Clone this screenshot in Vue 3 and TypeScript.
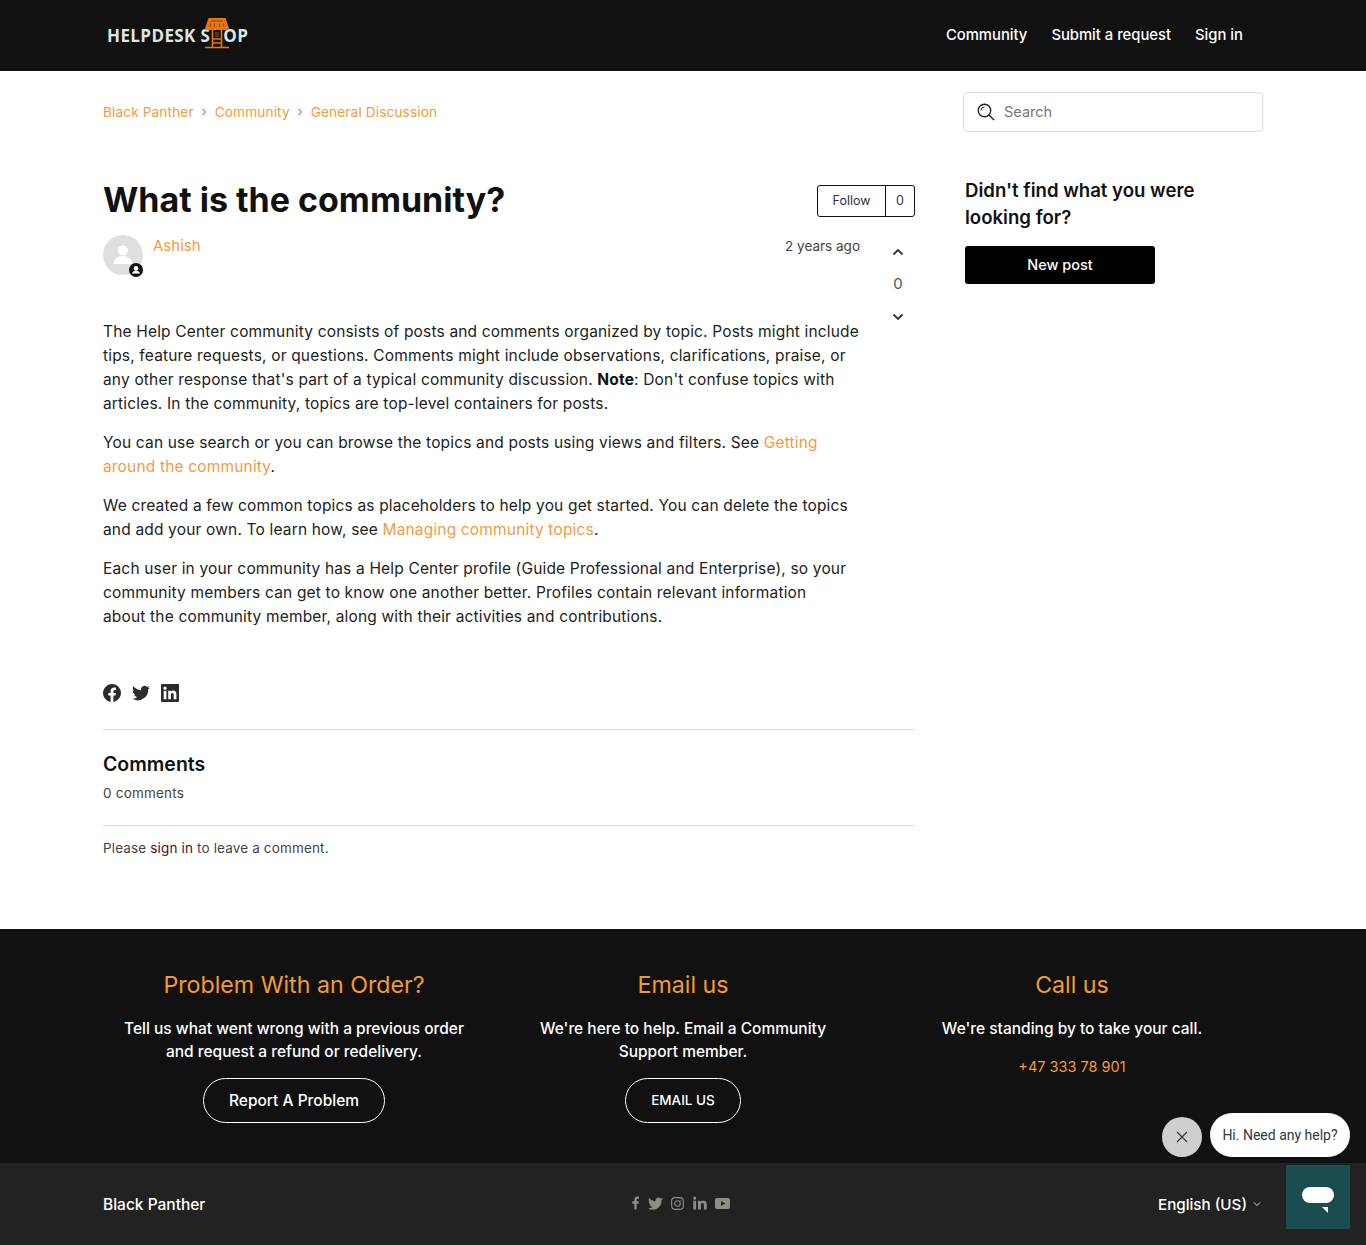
<template>
  <div class="page">
    <header class="topbar">
      <div class="topbar-inner">
        <a class="logo">
          <span class="logo-text">HELPDESK <span class="logo-s">S</span><span class="logo-gap" /><span>OP</span></span>
          <svg class="logo-icon" viewBox="0 0 26 32" width="26" height="32">
            <path d="M4.500 1h17L25 11.500a1.500 1.500 0 0 1-1.500 1.500h-21A1.500 1.500 0 0 1 1 11.500z" fill="#e8750f" />
            <path d="M7 4h12M6.500 6.500L6 10M10.500 6.500L10.300 10M15.500 6.500L15.700 10M19.500 6.500L20 10" stroke="#8a4508" stroke-width="1" fill="none" />
            <path d="M8.500 13v17M17.500 13v17M8.500 22h9M8.500 26h9M1 30.500h24" stroke="#e8750f" stroke-width="1.600" fill="none" />
            <rect x="11" y="15" width="4" height="5" fill="#5b3208" />
          </svg>
        </a>
        <nav class="topnav">
          <a>Community</a>
          <a>Submit a request</a>
          <a>Sign in</a>
        </nav>
      </div>
    </header>

    <main class="content">
      <div class="sub-row">
        <ol class="crumbs">
          <li v-for="(c, i) in crumbs" :key="c">
            <a>{{ c }}</a>
            <svg v-if="i < crumbs.length - 1" class="crumb-sep" viewBox="0 0 8 8" width="8" height="8">
              <path d="M2.500 1l3 3-3 3" stroke="#555" stroke-width="1" fill="none" />
            </svg>
          </li>
        </ol>
        <div class="search">
          <svg viewBox="0 0 18 18" width="18" height="18">
            <circle cx="7.500" cy="7.500" r="6.200" stroke="#222" stroke-width="1.400" fill="none" />
            <path d="M12 12l5 5" stroke="#222" stroke-width="1.400" />
            <path d="M4 7.500a3.500 3.500 0 0 1 3.500-3.500" stroke="#222" stroke-width="1" fill="none" />
          </svg>
          <span>Search</span>
        </div>
      </div>

      <div class="columns">
        <article class="post">
          <div class="post-head">
            <h1>What is the community?</h1>
            <div class="follow">
              <span class="follow-btn">Follow</span>
              <span class="follow-count">0</span>
            </div>
          </div>

          <div class="post-grid">
            <div class="post-main">
              <div class="author">
                <div class="avatar">
                  <svg viewBox="0 0 40 40" width="40" height="40">
                    <circle cx="20" cy="20" r="20" fill="#dfdfdf" />
                    <circle cx="20" cy="15.500" r="5" fill="#fff" />
                    <path d="M10.500 29c.5-5 4-8 9.500-8s9 3 9.500 8z" fill="#fff" />
                  </svg>
                  <svg class="avatar-badge" viewBox="0 0 14 14" width="14" height="14">
                    <circle cx="7" cy="7" r="7" fill="#111" />
                    <circle cx="7" cy="5.400" r="2.300" fill="#fff" />
                    <path d="M3 10.500c.6-2 2.200-2.700 4-2.700s3.400.7 4 2.700z" fill="#fff" />
                  </svg>
                </div>
                <a class="author-name">Ashish</a>
                <span class="when">2 years ago</span>
              </div>

              <div class="body">
                <p>The Help Center community consists of posts and comments organized by topic. Posts might include<br>tips, feature requests, or questions. Comments might include observations, clarifications, praise, or<br>any other response that's part of a typical community discussion. <b>Note</b>: Don't confuse topics with<br>articles. In the community, topics are top-level containers for posts.</p>
                <p>You can use search or you can browse the topics and posts using views and filters. See <a>Getting<br>around the community</a>.</p>
                <p>We created a few common topics as placeholders to help you get started. You can delete the topics<br>and add your own. To learn how, see <a>Managing community topics</a>.</p>
                <p>Each user in your community has a Help Center profile (Guide Professional and Enterprise), so your<br>community members can get to know one another better. Profiles contain relevant information<br>about the community member, along with their activities and contributions.</p>
              </div>
            </div>

            <div class="vote">
              <svg viewBox="0 0 12 8" width="12" height="8"><path d="M1.500 6.500L6 2l4.500 4.500" stroke="#333" stroke-width="1.800" fill="none" /></svg>
              <span>0</span>
              <svg viewBox="0 0 12 8" width="12" height="8"><path d="M1.500 1.500L6 6l4.500-4.500" stroke="#333" stroke-width="1.800" fill="none" /></svg>
            </div>
          </div>

          <div class="share">
            <svg viewBox="0 0 18 18" width="18" height="18">
              <path fill="#2c2c2c" d="M18 9a9 9 0 1 0-10.400 8.900v-6.300H5.300V9h2.300V7c0-2.300 1.300-3.500 3.400-3.500 1 0 2 .2 2 .2v2.200h-1.100c-1.100 0-1.500.7-1.500 1.400V9h2.500l-.4 2.600h-2.100v6.300A9 9 0 0 0 18 9z" />
            </svg>
            <svg viewBox="0 0 18 18" width="18" height="18">
              <path fill="#2c2c2c" d="M18 3.400c-.7.3-1.400.5-2.100.6.8-.5 1.300-1.200 1.600-2-.7.4-1.500.7-2.300.9A3.700 3.700 0 0 0 9 6.200C6 6 3.300 4.600 1.300 2.300c-1 1.700-.5 3.800 1.100 4.900-.6 0-1.200-.2-1.700-.5 0 1.800 1.300 3.300 3 3.700-.5.1-1.100.2-1.700.1.500 1.500 1.800 2.500 3.400 2.600A7.400 7.400 0 0 1 0 14.600 10.500 10.500 0 0 0 16.200 5.200c.7-.5 1.300-1.100 1.800-1.800z" />
            </svg>
            <svg viewBox="0 0 18 18" width="18" height="18">
              <path fill="#2c2c2c" fill-rule="evenodd" d="M1 0h16a1 1 0 0 1 1 1v16a1 1 0 0 1-1 1H1a1 1 0 0 1-1-1V1a1 1 0 0 1 1-1zM2.700 6.800v8.500h2.700V6.800zM4 2.600a1.600 1.600 0 1 0 0 3.200 1.600 1.600 0 0 0 0-3.200zM7.200 6.800v8.500h2.700v-4.400c0-1.200.4-2 1.500-2s1.300.9 1.300 2.100v4.300h2.700v-4.900c0-2.400-1.200-3.800-3.100-3.800-1.200 0-2 .6-2.400 1.300V6.800z" />
            </svg>
          </div>

          <section class="comments">
            <h2>Comments</h2>
            <div class="count">0 comments</div>
          </section>
          <p class="sign-note">Please <a>sign in</a> to leave a comment.</p>
        </article>

        <aside class="side">
          <h3>Didn't find what you were<br>looking for?</h3>
          <a class="new-post">New post</a>
        </aside>
      </div>
    </main>

    <section class="help">
      <div v-for="b in blocks" :key="b.title" class="help-col">
        <h4>{{ b.title }}</h4>
        <p v-html="b.text" />
        <a v-if="b.btn" class="pill" :class="{ 'pill-caps': b.btn === 'EMAIL US' }">{{ b.btn }}</a>
        <a v-else class="phone">+47 333 78 901</a>
      </div>
    </section>

    <footer class="bottom">
      <span class="brand">Black Panther</span>
      <div class="socials">
        <svg viewBox="0 0 8 15" width="7" height="14"><path fill="#8a8f85" d="M5.300 15V8.300h2.200l.4-2.700H5.300V4c0-.8.3-1.300 1.400-1.300H8V.2C7.700.1 7 0 6.100 0 4.100 0 2.700 1.200 2.700 3.600v2H.3v2.700h2.400V15z" /></svg>
        <svg viewBox="0 0 18 18" width="15" height="15"><path fill="#8a8f85" d="M18 3.400c-.7.3-1.400.5-2.100.6.8-.5 1.300-1.200 1.600-2-.7.4-1.500.7-2.300.9A3.700 3.700 0 0 0 9 6.200C6 6 3.300 4.600 1.300 2.300c-1 1.700-.5 3.800 1.100 4.900-.6 0-1.200-.2-1.700-.5 0 1.800 1.300 3.300 3 3.700-.5.1-1.100.2-1.700.1.500 1.500 1.800 2.500 3.400 2.600A7.400 7.400 0 0 1 0 14.600 10.500 10.500 0 0 0 16.200 5.200c.7-.5 1.300-1.100 1.800-1.800z" /></svg>
        <svg viewBox="0 0 14 14" width="13" height="13" fill="none" stroke="#8a8f85" stroke-width="1.200"><rect x=".7" y=".7" width="12.600" height="12.600" rx="3.500" /><circle cx="7" cy="7" r="3" /><circle cx="10.600" cy="3.400" r=".6" fill="#8a8f85" stroke="none" /></svg>
        <svg viewBox="0 0 15 14" width="14" height="14"><path fill="#8a8f85" d="M.3 4.700h3V14h-3zM1.800 0a1.700 1.700 0 1 1 0 3.400 1.700 1.700 0 0 1 0-3.400zM5.200 4.700H8V6c.5-.8 1.500-1.500 3-1.500 3 0 3.700 2 3.700 4.500v5h-3V9.600c0-1.100 0-2.500-1.500-2.500s-1.800 1.200-1.800 2.400V14h-3z" /></svg>
        <svg viewBox="0 0 15 11" width="15" height="11"><path fill="#8a8f85" fill-rule="evenodd" d="M2 0h11a2 2 0 0 1 2 2v7a2 2 0 0 1-2 2H2a2 2 0 0 1-2-2V2a2 2 0 0 1 2-2zm4 3v5l4.200-2.500z" /></svg>
      </div>
      <span class="lang">English (US)
        <svg viewBox="0 0 8 6" width="8" height="6"><path d="M1 1.500l3 3 3-3" stroke="#ddd" stroke-width="1" fill="none" /></svg>
      </span>
    </footer>

    <div class="widget-close">
      <svg viewBox="0 0 12 12" width="12" height="12"><path d="M1 1l10 10M11 1L1 11" stroke="#333" stroke-width="1.100" /></svg>
    </div>
    <div class="widget-bubble">Hi. Need any help?</div>
    <div class="widget-launch">
      <svg viewBox="0 0 32 26" width="32" height="26">
        <rect width="32" height="16" rx="8" fill="#fff" y="0" />
        <path d="M20 20h6v6z" fill="#fff" />
      </svg>
    </div>
  </div>
</template>

<script setup lang="ts">
const crumbs: string[] = ['Black Panther', 'Community', 'General Discussion']

interface HelpBlock {
  title: string
  text: string
  btn?: string
}

const blocks: HelpBlock[] = [
  {
    title: 'Problem With an Order?',
    text: 'Tell us what went wrong with a previous order<br>and request a refund or redelivery.',
    btn: 'Report A Problem',
  },
  {
    title: 'Email us',
    text: "We're here to help. Email a Community<br>Support member.",
    btn: 'EMAIL US',
  },
  {
    title: 'Call us',
    text: "We're standing by to take your call.",
  },
]
</script>

<style scoped>
.page {
  font-family: Inter, "Open Sans", sans-serif;
  color: #222;
  position: relative;
  min-height: 1245px;
}
a { color: #f29b45; text-decoration: none; }

.topbar { background: #111; height: 71px; }
.topbar-inner {
  width: 1160px;
  margin: 0 auto;
  height: 100%;
  display: flex;
  align-items: center;
  justify-content: space-between;
}
.logo { position: relative; display: block; margin-left: 4px; }
.logo-text {
  font-family: "Open Sans", sans-serif;
  font-weight: 700;
  font-size: 17px;
  letter-spacing: .4px;
  color: #dfe5e3;
  display: flex;
  white-space: pre;
}
.logo-gap { width: 13px; }
.logo-icon { position: absolute; left: 97px; top: -7px; }
.topnav { display: flex; gap: 24px; margin-right: 20px; padding-bottom: 1px; }
.topnav a { color: #fff; font-size: 14.800px; font-weight: 500; }

.content { width: 1160px; margin: 0 auto; }
.sub-row {
  display: flex;
  justify-content: space-between;
  align-items: flex-start;
  padding-top: 21px;
}
.crumbs {
  list-style: none;
  margin: 0;
  padding: 10px 0 0;
  display: flex;
  font-size: 13.700px;
  letter-spacing: .1px;
  line-height: 20px;
}
.crumbs li { display: flex; align-items: center; }
.crumb-sep { margin: 0 7px 0 6px; }
.search {
  width: 300px;
  height: 40px;
  box-sizing: border-box;
  border: 1px solid #ddd;
  border-radius: 4px;
  display: flex;
  align-items: center;
  gap: 9px;
  padding-left: 13px;
  font-size: 14.500px;
  color: #777;
}
.search span { padding-bottom: 2px; }

.columns { display: flex; justify-content: space-between; margin-top: 48px; }
.post { width: 812px; }
.post-head { display: flex; justify-content: space-between; align-items: flex-start; height: 40px; margin-top: 1px; }
h1 { margin: -1px 0 0; font-size: 34px; font-weight: 700; color: #111; line-height: 40px; }
.follow {
  display: flex;
  border: 1px solid #111;
  border-radius: 3px;
  height: 32px;
  margin-top: 4px;
  box-sizing: border-box;
  font-size: 12.500px;
  line-height: 30px;
  color: #333;
}
.follow-btn { width: 67px; text-align: center; border-right: 1px solid #111; }
.follow-count { width: 28px; text-align: center; }

.post-grid { display: flex; justify-content: space-between; margin-top: 14px; }
.post-main { width: 757px; }
.author { display: flex; align-items: flex-start; }
.avatar { position: relative; width: 40px; height: 40px; }
.avatar-badge { position: absolute; right: 0; bottom: -2px; }
.author-name { font-size: 15px; margin-left: 10px; line-height: 22px; }
.when { margin-left: auto; font-size: 13.500px; color: #444; line-height: 22px; }

.body { margin-top: 45px; font-size: 15.500px; letter-spacing: .17px; line-height: 24px; color: #222; }
.body p { margin: 0 0 15px; white-space: nowrap; }
.body b { color: #111; }

.vote {
  width: 34px;
  display: flex;
  flex-direction: column;
  align-items: center;
  color: #555;
  font-size: 15px;
  padding-top: 13px;
}
.vote span { margin: 17px 0 18px; line-height: 22px; }

.share { display: flex; gap: 11px; margin-top: 40px; padding-bottom: 27px; border-bottom: 1px solid #ddd; }
.comments { padding: 22px 0 22px; border-bottom: 1px solid #ddd; }
h2 { margin: 0; font-size: 19.500px; font-weight: 600; color: #111; line-height: 24px; }
.count { font-size: 13.500px; letter-spacing: .2px; color: #444; margin-top: 7px; line-height: 20px; }
.sign-note { font-size: 13.500px; letter-spacing: .15px; margin: 12px 0 0; line-height: 20px; color: #444; }
.sign-note a { color: #4a0d1f; }

.side { width: 298px; margin-top: -3px; }
h3 { margin: 0; font-size: 18.600px; font-weight: 600; line-height: 27px; color: #111; }
.new-post {
  display: block;
  width: 190px;
  height: 38px;
  line-height: 38px;
  background: #000;
  color: #fff;
  border-radius: 3px;
  text-align: center;
  font-size: 14.500px;
  font-weight: 500;
  margin-top: 15px;
}

.help {
  margin-top: 71px;
  height: 234px;
  box-sizing: border-box;
  background: #111;
  color: #fff;
  display: grid;
  grid-template-columns: 389px 389px 389px;
  justify-content: center;
  padding-top: 41px;
  text-align: center;
}
.help-col h4 { margin: 0; font-size: 23.200px; font-weight: 400; color: #f29b2e; line-height: 30px; }
.help-col p { margin: 17px 0 0; font-size: 15.500px; line-height: 23px; font-weight: 500; }
.pill {
  display: inline-block;
  margin-top: 15px;
  padding: 0 24.500px;
  height: 43px;
  line-height: 43px;
  border: 1px solid #fff;
  border-radius: 23px;
  color: #fff;
  font-size: 15.500px;
  font-weight: 500;
}
.pill-caps { font-size: 13.500px; padding: 0 25px; }
.phone { display: block; margin-top: 15px; color: #f29b2e; font-size: 14.500px; line-height: 23px; }

.bottom {
  height: 82px;
  background: #222;
  color: #fff;
  padding: 0 103px;
  display: grid;
  grid-template-columns: 1fr 1fr 1fr;
  align-items: center;
}
.brand { font-size: 15.500px; font-weight: 500; }
.socials { display: flex; gap: 8.500px; justify-content: center; align-items: center; margin: 0 3px 2px 0; }
.lang { justify-self: end; font-size: 15.200px; font-weight: 500; display: flex; align-items: center; gap: 6px; margin-right: 2px; }

.widget-close {
  position: absolute;
  left: 1162px;
  top: 1117px;
  width: 40px;
  height: 40px;
  border-radius: 50%;
  background: #cfcfcf;
  display: flex;
  align-items: center;
  justify-content: center;
}
.widget-bubble {
  position: absolute;
  left: 1210px;
  top: 1113px;
  width: 140px;
  height: 44px;
  line-height: 44px;
  border-radius: 22px;
  background: #fff;
  text-align: center;
  font-family: Roboto, sans-serif;
  font-size: 14px;
  color: #2f3941;
}
.widget-launch {
  position: absolute;
  left: 1286px;
  top: 1165px;
  width: 64px;
  height: 64px;
  background: #1b4c50;
  display: flex;
  align-items: center;
  justify-content: center;
}
.widget-launch svg { margin-top: 6px; }
</style>

<style>
html, body { margin: 0; background: #fff; }
</style>
